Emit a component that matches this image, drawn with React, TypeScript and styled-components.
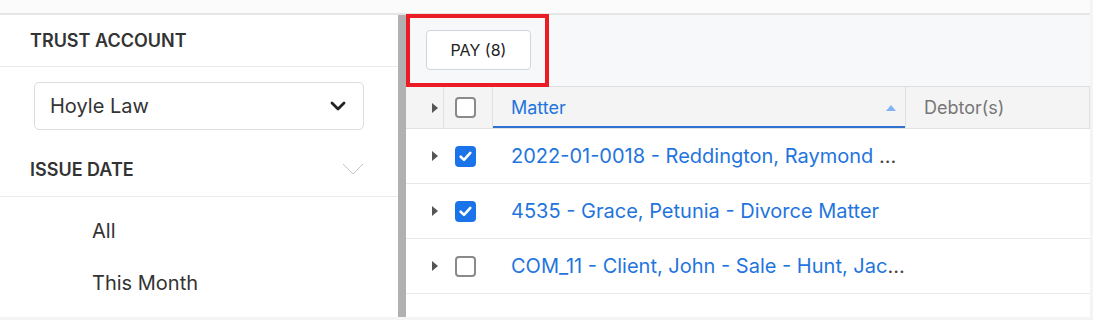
import React from "react"
import styled, { createGlobalStyle } from "styled-components"

const GlobalStyle = createGlobalStyle`
    body {
        margin : 0;
        font-family : Inter, "Noto Sans", sans-serif;
        background-color : #f4f4f5;
    }
`

const Page = styled.div`
    width : 1093px;
    height : 320px;
    overflow : hidden;
`

const TopStrip = styled.div`
    width : 1090px;
    height : 13px;
    background-color : #fbfbfb;
    border-bottom : solid 2px #e6e6e6;
`

const Main = styled.div`
    width : 1090px;
    height : 302px;
    display : flex;
`

const Sidebar = styled.div`
    width : 398px;
    background-color : white;
    display : flex;
    flex-direction : column;
`

const SectionHeader = styled.div<{ $h : number }>`
    height : ${p => p.$h}px;
    padding : 0 34px 0 30px;
    display : flex;
    align-items : center;
    justify-content : space-between;
    border-bottom : solid 1px #ebebeb;
    font-size : 18px;
    font-weight : 600;
    color : #333;
`

const SelectWrap = styled.div`
    padding : 15px 34px 0 34px;
    margin-bottom : 12px;
`

const SelectBox = styled.div`
    height : 46px;
    border : solid 1px #dcdcdc;
    border-radius : 5px;
    display : flex;
    align-items : center;
    justify-content : space-between;
    padding : 0 17px 0 15px;
    font-size : 20px;
    color : #333;
`

const OptionList = styled.div`
    display : flex;
    flex-direction : column;
    padding-top : 8px;
`

const Option = styled.div`
    height : 52px;
    padding-left : 92px;
    display : flex;
    align-items : center;
    font-size : 20px;
    color : #333;
`

const ScrollTrack = styled.div`
    width : 8px;
    background-color : #b1b1b1;
`

const Content = styled.div`
    flex : 1;
    background-color : white;
    display : flex;
    flex-direction : column;
    position : relative;
`

const Toolbar = styled.div`
    height : 71px;
    background-color : #f7f8fa;
    display : flex;
    align-items : center;
    padding-left : 20px;
`

const Highlight = styled.div`
    position : absolute;
    left : 0;
    top : -1px;
    width : 135px;
    height : 65px;
    border : solid 4px #ec1c24;
`

const PayButton = styled.button`
    height : 40px;
    width : 105px;
    background-color : white;
    border : solid 1px #cfd5e0;
    border-radius : 4px;
    font-family : inherit;
    font-size : 16px;
    color : #222;
    margin-top : -1px;
`

const Row = styled.div<{ $head ?: boolean }>`
    display : grid;
    grid-template-columns : 38px 49px 413px 1fr;
    height : ${p => p.$head ? 41 : 54}px;
    background-color : ${p => p.$head ? "#f4f4f4" : "white"};
    border-top : ${p => p.$head ? "solid 1px #dedede" : "none"};
    border-bottom : solid 1px ${p => p.$head ? "#e2e2e2" : "#e8e8e8"};
`

const Cell = styled.div<{ $line ?: boolean }>`
    display : flex;
    align-items : center;
    border-right : ${p => p.$line ? "solid 1px #e0e0e0" : "none"};
`

const TextCell = styled.div<{ $head ?: boolean, $active ?: boolean }>`
    display : flex;
    align-items : center;
    justify-content : space-between;
    padding : 0 9px 0 18px;
    font-size : ${p => p.$head ? 18 : 20}px;
    color : ${p => p.$head && !p.$active ? "#777" : "#1f75dd"};
    white-space : nowrap;
    overflow : hidden;
    border-right : ${p => p.$head ? "solid 1px #e0e0e0" : "none"};
    box-shadow : ${p => p.$active ? "inset 0 -2px 0 #2f72d0" : "none"};
`

const Dots = styled.span`
    color : #444;
`

const Expander = styled.div`
    width : 0;
    height : 0;
    border-top : solid 5px transparent;
    border-bottom : solid 5px transparent;
    border-left : solid 6px #555;
    margin-left : 26px;
`

const Check = styled.div<{ $on ?: boolean }>`
    width : 21px;
    height : 21px;
    margin-left : 11px;
    box-sizing : border-box;
    border-radius : 4px;
    border : solid 2px ${p => p.$on ? "#1a73e8" : "#8a8a8a"};
    background-color : ${p => p.$on ? "#1a73e8" : "white"};
    display : flex;
    align-items : center;
    justify-content : center;
`

const SortArrow = styled.div`
    width : 0;
    height : 0;
    border-left : solid 5px transparent;
    border-right : solid 5px transparent;
    border-bottom : solid 6px #7fb3f2;
`

const rows = [
    { text : "2022-01-0018 - Reddington, Raymond ", dots : true, on : true },
    { text : "4535 - Grace, Petunia - Divorce Matter", dots : false, on : true },
    { text : "COM_11 - Client, John - Sale - Hunt, Jac", dots : true, on : false },
]

function Tick(){
    return (
        <svg width="15" height="15" viewBox="0 0 14 14">
            <path d="M2.5 7.2 L5.6 10.2 L11.5 3.6" stroke="white" strokeWidth="2.4" fill="none" strokeLinecap="round" strokeLinejoin="round"/>
        </svg>
    )
}

function App(){
    return (
        <Page>
            <GlobalStyle/>
            <TopStrip/>
            <Main>
                <Sidebar>
                    <SectionHeader $h={51}>TRUST ACCOUNT</SectionHeader>
                    <SelectWrap>
                        <SelectBox>
                            Hoyle Law
                            <svg width="16" height="10" viewBox="0 0 16 10">
                                <path d="M2 2 L8 8 L14 2" stroke="#222" strokeWidth="2.8" fill="none" strokeLinecap="round" strokeLinejoin="round"/>
                            </svg>
                        </SelectBox>
                    </SelectWrap>
                    <SectionHeader $h={54}>
                        ISSUE DATE
                        <svg width="22" height="12" viewBox="0 0 22 12">
                            <path d="M1 1 L11 11 L21 1" stroke="#c4c4c4" strokeWidth="1" fill="none"/>
                        </svg>
                    </SectionHeader>
                    <OptionList>
                        <Option>All</Option>
                        <Option>This Month</Option>
                    </OptionList>
                </Sidebar>
                <ScrollTrack/>
                <Content>
                    <Toolbar>
                        <PayButton>PAY (8)</PayButton>
                    </Toolbar>
                    <Highlight/>
                    <Row $head>
                        <Cell $line><Expander/></Cell>
                        <Cell $line><Check/></Cell>
                        <TextCell $head $active>Matter<SortArrow/></TextCell>
                        <TextCell $head>Debtor(s)</TextCell>
                    </Row>
                    {rows.map(r => (
                        <Row key={r.text}>
                            <Cell><Expander/></Cell>
                            <Cell><Check $on={r.on}>{r.on && <Tick/>}</Check></Cell>
                            <TextCell>
                                <span>{r.text}{r.dots && <Dots>...</Dots>}</span>
                            </TextCell>
                            <TextCell/>
                        </Row>
                    ))}
                </Content>
            </Main>
        </Page>
    )
}

export default App;
